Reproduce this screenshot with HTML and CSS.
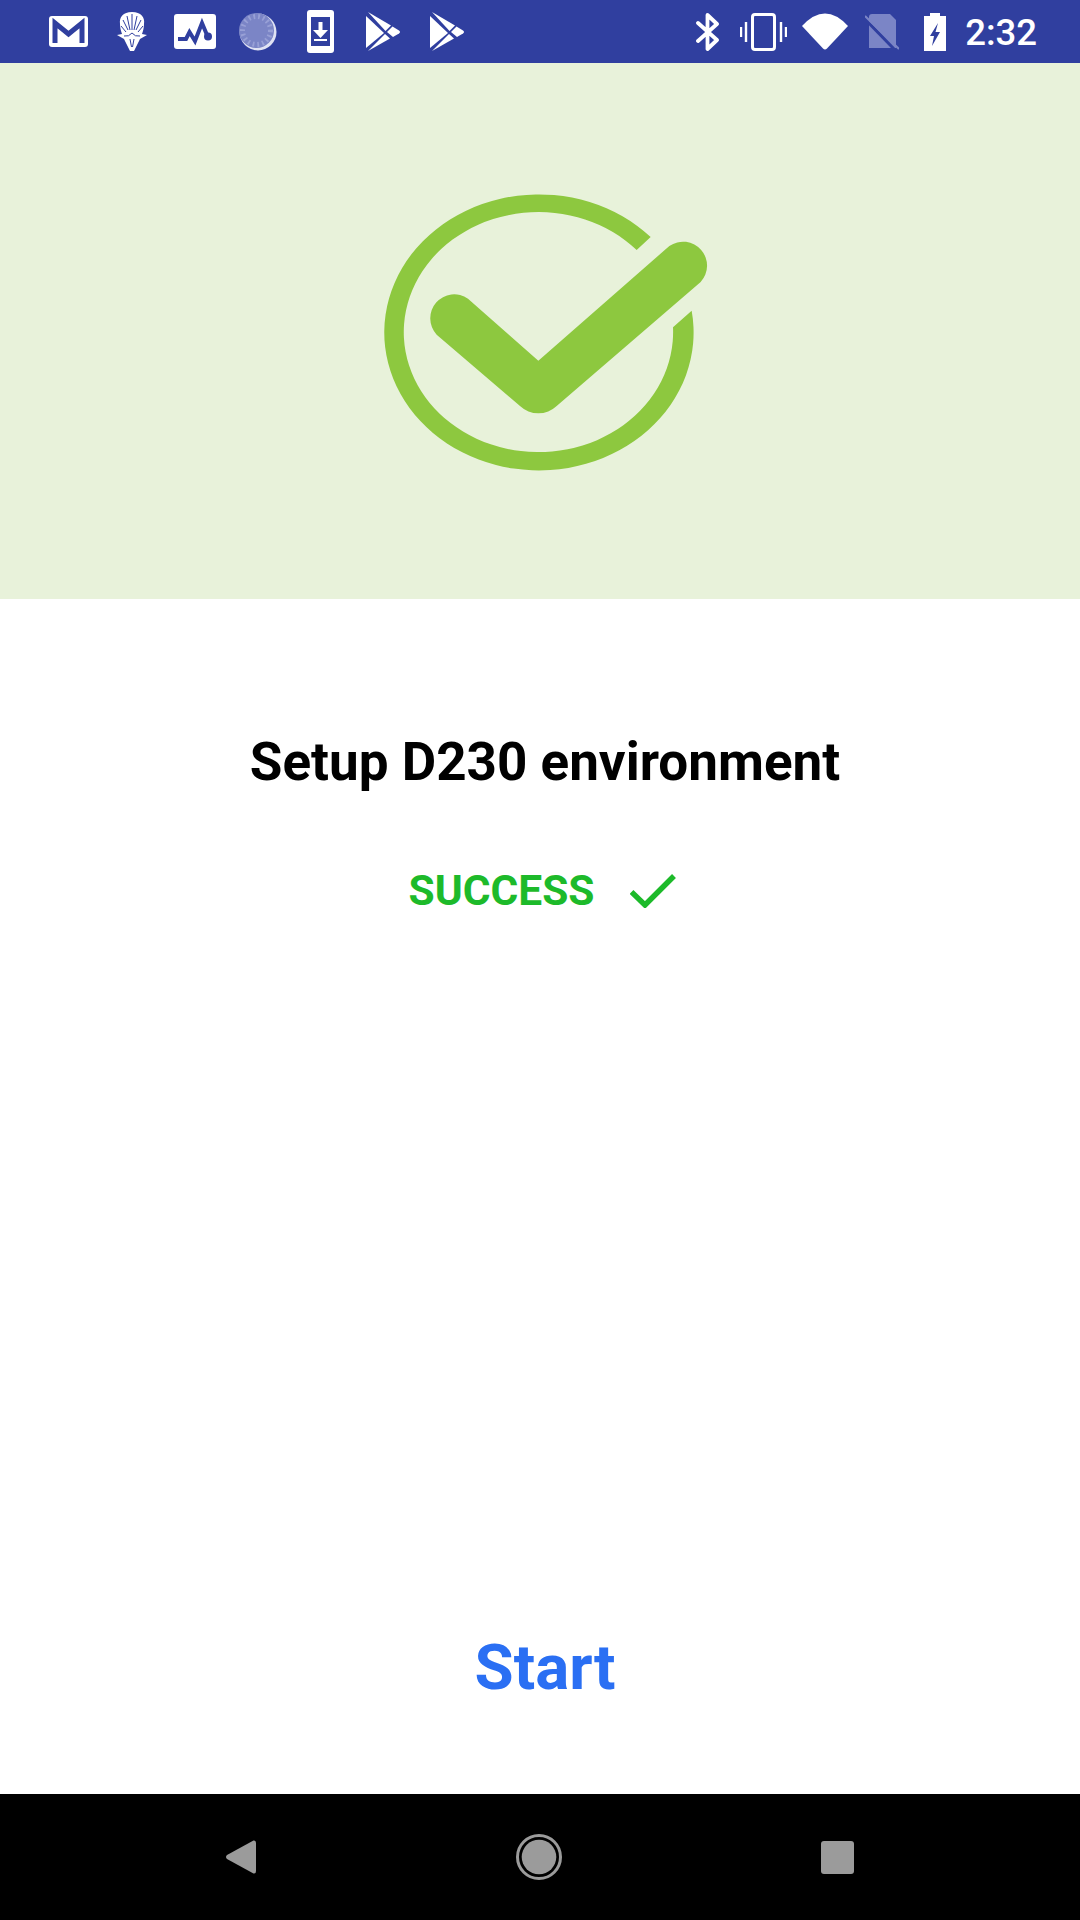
FILE: index.html
```html
<!DOCTYPE html>
<html lang="en">
<head>
    <meta charset="UTF-8">
    <meta name="viewport" content="width=device-width, initial-scale=1.0">
    <title>Setup D230 environment</title>
    <link rel="stylesheet" href="styles.css">
</head>
<body>
    <div class="status-bar">
        <div class="status-left">
            <!-- mail -->
            <svg class="icon icon-mail" viewBox="0 0 39 31">
                <rect width="39" height="31" rx="3" fill="#fff"/>
                <path d="M6 27V7L19.500 18 33 7V27" fill="none" stroke="#303f9f" stroke-width="5"/>
            </svg>
            <!-- mask -->
            <svg class="icon icon-mask" viewBox="0 0 30 39">
                <path d="M15 0C24 0 28 5 27 12C27 16 26 19 25 22L30 23L23 27L17 39H13L7 27L0 23L5 22C4 19 3 16 3 12C2 5 6 0 15 0Z" fill="#fff"/>
                <path d="M15 2V18M10 4L13 18M20 4L17 18M6 8L11 18M24 8L19 18M4 14L9 20M26 14L21 20M7 24Q12 25 15 21Q18 25 23 24M13 27L14.500 35M17 27L15.500 35" fill="none" stroke="#303f9f" stroke-width="1"/>
            </svg>
            <!-- pulse -->
            <svg class="icon icon-pulse" viewBox="0 0 42 35">
                <rect width="42" height="35" rx="3" fill="#fff"/>
                <path d="M4 25H12L15.500 18 21 27 28 9 33 21" fill="none" stroke="#303f9f" stroke-width="4"/>
                <circle cx="34" cy="22.500" r="4" fill="#303f9f"/>
            </svg>
            <!-- loading circle -->
            <svg class="icon icon-spin" viewBox="0 0 38 38">
                <circle cx="19" cy="19" r="18.500" fill="#dfe2f3"/>
                <circle cx="17.500" cy="17.500" r="17.500" fill="#7b85c6"/>
                <circle cx="17.500" cy="17.500" r="14" fill="none" stroke="#98a0d6" stroke-width="5" stroke-dasharray="1.800 3"/>
            </svg>
            <!-- download to phone -->
            <svg class="icon icon-phone" viewBox="0 0 27 43">
                <rect width="27" height="43" rx="3" fill="#fff"/>
                <rect x="4" y="7" width="19" height="29" fill="#303f9f"/>
                <path d="M13.500 12V21" stroke="#fff" stroke-width="4" fill="none"/>
                <path d="M6 20H21L13.500 28Z" fill="#fff"/>
                <rect x="7" y="29" width="13" height="2" fill="#fff"/>
            </svg>
            <!-- play store -->
            <svg class="icon icon-play" viewBox="0 0 34 39">
                <path d="M0 4L18 21 0 36Z" fill="#fff"/>
                <path d="M2 0L25 13.500 19.500 19Z" fill="#fff"/>
                <path d="M26.500 14.500L33 18.500Q35 20 33 21.500L27 25 21 20Z" fill="#fff"/>
                <path d="M2 39L24 26.500 19 22Z" fill="#fff"/>
            </svg>
            <svg class="icon icon-play" viewBox="0 0 34 39">
                <path d="M0 4L18 21 0 36Z" fill="#fff"/>
                <path d="M2 0L25 13.500 19.500 19Z" fill="#fff"/>
                <path d="M26.500 14.500L33 18.500Q35 20 33 21.500L27 25 21 20Z" fill="#fff"/>
                <path d="M2 39L24 26.500 19 22Z" fill="#fff"/>
            </svg>
        </div>
        <div class="status-right">
            <!-- bluetooth -->
            <svg class="icon icon-bt" viewBox="0 0 24 38">
                <path d="M2 10L21 27 11.500 36V2L21 11 2 28" fill="none" stroke="#fff" stroke-width="3.800" stroke-linecap="round" stroke-linejoin="round"/>
            </svg>
            <!-- vibrate -->
            <svg class="icon icon-vib" viewBox="0 0 47 38">
                <rect x="12.500" y="1.500" width="22" height="35" rx="2.500" fill="none" stroke="#fff" stroke-width="3"/>
                <path d="M1 14V24M6 9V29M41 9V29M46 14V24" stroke="#fff" stroke-width="2.400" fill="none"/>
            </svg>
            <!-- wifi -->
            <svg class="icon icon-wifi" viewBox="0 0 46 37">
                <path d="M0 13Q23 -12 46 13L25 35.500Q23 37.500 21 35.500Z" fill="#fff"/>
            </svg>
            <!-- no sim -->
            <svg class="icon icon-sim" viewBox="0 0 34 36">
                <path d="M4 3Q4 0 7 0H25L31 6V34H4Z" fill="#7b85c6"/>
                <path d="M0 5L30 36" stroke="#303f9f" stroke-width="3"/>
                <path d="M0 2L34 35" stroke="#7b85c6" stroke-width="2"/>
            </svg>
            <!-- battery charging -->
            <svg class="icon icon-batt" viewBox="0 0 22 38">
                <path d="M6 0H16V3H22V38H0V3H6Z" fill="#fff"/>
                <path d="M14 10L6 23H10L8 33L16 19H11.500Z" fill="#303f9f"/>
            </svg>
            <span class="clock">2:32</span>
        </div>
    </div>

    <div class="hero">
        <svg class="hero-check" viewBox="0 0 1080 960">
            <path d="M872 201A464 414 0 1 0 995 422L939 472A404 360 0 1 1 830 240Z" fill="#8dc83f"/>
            <path d="M535 572L928 228A72 72 0 0 1 1022 336L590 708A80 80 0 0 1 480 708L230 494A72 72 0 0 1 324 386Z" fill="#8dc83f"/>
        </svg>
    </div>

    <div class="content">
        <h1 class="title">Setup D230 environment</h1>
        <div class="result">
            <span class="result-text">SUCCESS</span>
            <svg class="result-check" viewBox="0 0 46 34">
                <path d="M1.500 18L15 31 44 2" fill="none" stroke="#1dba2a" stroke-width="5.500"/>
            </svg>
        </div>
        <button class="start-btn">Start</button>
    </div>

    <div class="nav-bar">
        <svg class="nav-back" viewBox="0 0 30 34">
            <path d="M27.500 0.500Q30 0 30 3V31Q30 34 27.500 33.500L1 19Q-1 17 1 15Z" fill="#9b9b9b"/>
        </svg>
        <svg class="nav-home" viewBox="0 0 46 46">
            <circle cx="23" cy="23" r="21.500" fill="none" stroke="#9b9b9b" stroke-width="3"/>
            <circle cx="23" cy="23" r="17.300" fill="#9b9b9b"/>
        </svg>
        <div class="nav-recent"></div>
    </div>
</body>
</html>
```

FILE: styles.css
```css
body {
    font-family: Roboto, "Liberation Sans", sans-serif;
    display: flex;
    flex-direction: column;
    width: 1080px;
    height: 1920px;
    margin: 0;
    overflow: hidden;
    background-color: white;
}
.status-bar {
    display: flex;
    justify-content: space-between;
    align-items: center;
    height: 63px;
    flex-shrink: 0;
    padding: 0 43px 0 49px;
    background-color: #303f9f;
}
.status-left, .status-right {
    display: flex;
    align-items: center;
}
.icon {
    display: block;
    flex-shrink: 0;
}
.icon-mail { width: 39px; height: 31px; margin-right: 29px; }
.icon-mask { width: 30px; height: 39px; margin-right: 27px; }
.icon-pulse { width: 42px; height: 35px; margin-right: 23px; }
.icon-spin { width: 38px; height: 38px; margin-right: 30px; }
.icon-phone { width: 27px; height: 43px; margin-right: 32px; }
.icon-play { width: 34px; height: 39px; margin-right: 30px; }
.icon-bt { width: 24px; height: 38px; margin-right: 20px; }
.icon-vib { width: 47px; height: 38px; margin-right: 15px; }
.icon-wifi { width: 46px; height: 37px; margin-right: 17px; }
.icon-sim { width: 34px; height: 36px; margin-right: 25px; }
.icon-batt { width: 22px; height: 38px; margin-right: 19px; }
.clock {
    padding-top: 2px;
    font-size: 36.500px;
    line-height: 61px;
    font-weight: 500;
    color: white;
}
.hero {
    display: flex;
    justify-content: center;
    align-items: flex-start;
    height: 536px;
    flex-shrink: 0;
    background-color: #e8f2da;
}
.hero-check {
    display: block;
    width: 360px;
    height: 320px;
    margin-top: 107px;
}
.content {
    display: flex;
    flex-direction: column;
    align-items: center;
    flex: 1;
    padding-left: 10px;
}
.title {
    margin: 130px 0 0;
    font-size: 53px;
    line-height: 66px;
    font-weight: bold;
    color: black;
}
.result {
    display: flex;
    align-items: center;
    gap: 35px;
    margin-top: 66px;
    margin-right: 6px;
}
.result-text {
    font-size: 42.500px;
    line-height: 60px;
    font-weight: bold;
    color: #1dba2a;
}
.result-check {
    display: block;
    width: 46px;
    height: 34px;
}
.start-btn {
    margin-top: auto;
    margin-bottom: 86px;
    padding: 0;
    border: none;
    background: none;
    font-family: inherit;
    font-size: 63.500px;
    line-height: 80px;
    font-weight: bold;
    color: #2a6ff3;
}
.nav-bar {
    display: flex;
    justify-content: space-between;
    align-items: center;
    height: 126px;
    flex-shrink: 0;
    padding: 0 226px;
    background-color: black;
}
.nav-back { display: block; width: 30px; height: 34px; }
.nav-home { display: block; width: 46px; height: 46px; }
.nav-recent {
    width: 33px;
    height: 33px;
    border-radius: 3px;
    background-color: #9b9b9b;
}
```
